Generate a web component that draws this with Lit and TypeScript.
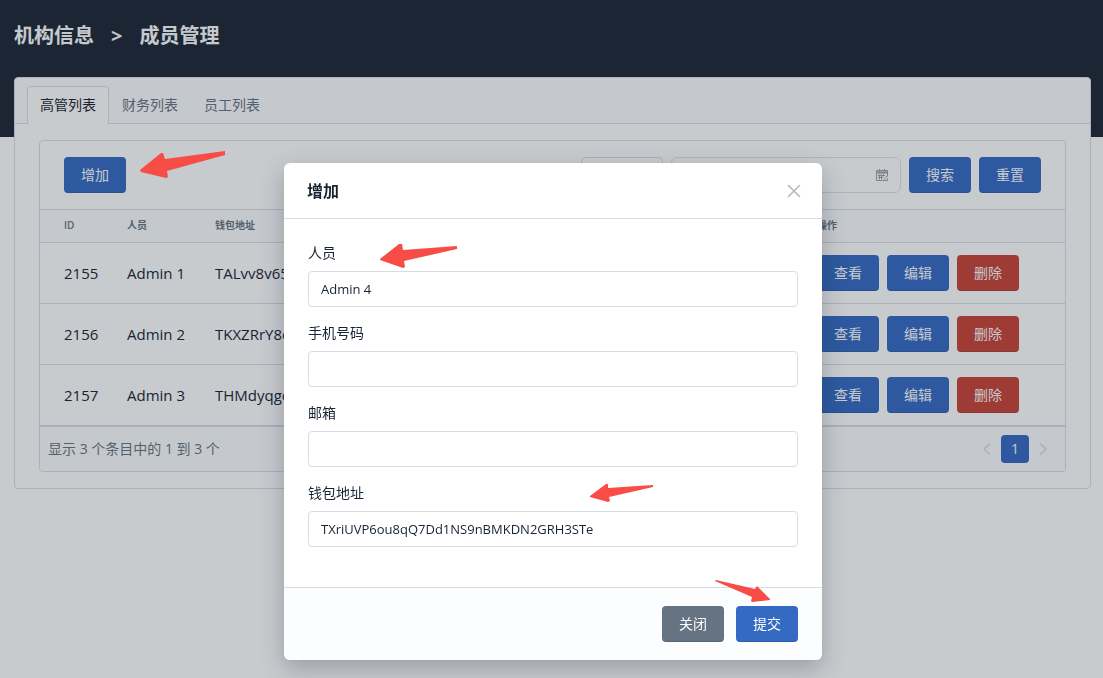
import { LitElement, html, css, svg } from "lit";
import { customElement, property } from "lit/decorators.js";

interface Member {
  id: number;
  name: string;
  wallet: string;
}

interface Field {
  key: string;
  label: string;
  value: string;
}

const MEMBERS: Member[] = [
  { id: 2155, name: "Admin 1", wallet: "TALvv8v65" },
  { id: 2156, name: "Admin 2", wallet: "TKXZRrY8c" },
  { id: 2157, name: "Admin 3", wallet: "THMdyqgc" },
];

const FIELDS: Field[] = [
  { key: "person", label: "人员", value: "Admin 4" },
  { key: "phone", label: "手机号码", value: "" },
  { key: "email", label: "邮箱", value: "" },
  { key: "wallet", label: "钱包地址", value: "TXriUVP6ou8qQ7Dd1NS9nBMKDN2GRH3STe" },
];

const TABS = ["高管列表", "财务列表", "员工列表"];

const base = css`
  * {
    box-sizing: border-box;
  }
  button,
  input,
  select {
    font: inherit;
    margin: 0;
  }
  .btn {
    height: 36px;
    padding: 0 16px;
    border: 1px solid transparent;
    border-bottom-color: rgba(24, 36, 51, 0.16);
    border-radius: 4px;
    background: #356ac3;
    color: #fcfdfe;
    font-size: 14px;
    line-height: 20px;
    white-space: nowrap;
  }
  .btn.danger {
    background: #c94237;
  }
  .btn.neutral {
    background: #667382;
  }
`;

@customElement("member-table")
class MemberTable extends LitElement {
  @property({ attribute: false }) members: Member[] = [];

  static styles = [
    base,
    css`
      :host {
        display: block;
        border: 1px solid #dadce5;
        border-radius: 4px;
        background: #fff;
      }
      .toolbar {
        display: flex;
        gap: 8px;
        padding: 16px 24px;
      }
      .spacer {
        flex: 1;
      }
      .kind {
        width: 82px;
        height: 36px;
        padding: 0 12px;
        border: 1px solid #dadce5;
        border-radius: 4px;
        background: #fff;
        color: #182433;
        font-size: 14px;
        appearance: none;
      }
      .range {
        display: flex;
        align-items: center;
        width: 230px;
        height: 36px;
        padding: 0 12px;
        border: 1px solid #dfe1e6;
        border-radius: 6px;
      }
      .range input {
        flex: 1;
        min-width: 0;
        border: 0;
        outline: 0;
        background: transparent;
      }
      .range svg {
        color: #9a9fa6;
      }
      table {
        width: 100%;
        border-collapse: separate;
        border-spacing: 0;
        table-layout: fixed;
      }
      .c-id {
        width: 79px;
      }
      .c-name {
        width: 88px;
      }
      .c-ops {
        width: 256px;
      }
      th {
        height: 34px;
        padding: 0 8px 2px;
        border-top: 1px solid #dadce5;
        border-bottom: 1px solid #dadce5;
        background: #fcfdfe;
        color: #667382;
        font-size: 10px;
        line-height: 16px;
        font-weight: 600;
        text-align: left;
      }
      td {
        height: 61px;
        padding: 0 8px;
        border-bottom: 1px solid #dadce5;
        color: #182433;
        font-size: 15px;
        line-height: 20px;
        white-space: nowrap;
      }
      th:first-child,
      td:first-child {
        padding-left: 24px;
      }
      .ops {
        display: flex;
        gap: 8px;
      }
      .foot {
        display: flex;
        align-items: center;
        justify-content: space-between;
        padding: 8px;
        border-top: 1px solid #dadce5;
        border-radius: 0 0 4px 4px;
        background: #fcfdfe;
        color: #667382;
        font-size: 14px;
        line-height: 20px;
      }
      .pager {
        display: flex;
      }
      .page {
        display: grid;
        place-items: center;
        width: 28px;
        height: 28px;
        padding: 0;
        border: 0;
        border-radius: 4px;
        background: none;
        color: #d3d7dd;
      }
      .page.current {
        background: #356ac3;
        color: #fcfdfe;
      }
    `,
  ];

  render() {
    return html`
      <div class="toolbar">
        <button class="btn" type="button">增加</button>
        <span class="spacer"></span>
        <select class="kind" aria-label="类型"><option></option></select>
        <div class="range">
          <input type="text" aria-label="日期" />
          <svg width="12" height="12" viewBox="0 0 12 12" fill="none" stroke="currentColor">
            <path d="M.5 1.500h11v6M.5 1.500v10h6M3.500 0v2.500M8.500 0v2.500M2 6.500h7M2 8.500h5M3.500 5.500v5M5.500 5.500v5M7.500 5.500v2M7 11.500h4.500v-2M8 10.500l3.500-4"/>
            <path d="M.5 3.500h11" stroke-width="2"/>
          </svg>
        </div>
        <button class="btn" type="button">搜索</button>
        <button class="btn" type="button">重置</button>
      </div>
      <table>
        <colgroup>
          <col class="c-id" />
          <col class="c-name" />
          <col />
          <col class="c-ops" />
        </colgroup>
        <thead>
          <tr>
            <th>ID</th>
            <th>人员</th>
            <th>钱包地址</th>
            <th>操作</th>
          </tr>
        </thead>
        <tbody>
          ${this.members.map(
            (m) => html`<tr>
              <td>${m.id}</td>
              <td>${m.name}</td>
              <td>${m.wallet}</td>
              <td>
                <div class="ops">
                  <button class="btn" type="button">查看</button>
                  <button class="btn" type="button">编辑</button>
                  <button class="btn danger" type="button">删除</button>
                </div>
              </td>
            </tr>`
          )}
        </tbody>
      </table>
      <div class="foot">
        <span>显示 ${this.members.length} 个条目中的 1 到 ${this.members.length} 个</span>
        <div class="pager">
          <button class="page" type="button" aria-label="上一页">
            <svg width="16" height="16" viewBox="0 0 16 16" fill="none" stroke="currentColor" stroke-width="1.2"><path d="M11 2.500L5 8l6 5.500"/></svg>
          </button>
          <button class="page current" type="button">1</button>
          <button class="page" type="button" aria-label="下一页">
            <svg width="16" height="16" viewBox="0 0 16 16" fill="none" stroke="currentColor" stroke-width="1.2"><path d="M5 2.500L11 8l-6 5.500"/></svg>
          </button>
        </div>
      </div>
    `;
  }
}

@customElement("member-dialog")
class MemberDialog extends LitElement {
  static styles = [
    base,
    css`
      :host {
        position: fixed;
        inset: 0;
        display: block;
        padding: 163px 11px 16px 14px;
        background: rgba(24, 38, 51, 0.24);
        overflow: auto;
      }
      .modal {
        max-width: 538px;
        margin: 0 auto;
        border-radius: 6px;
        background: #fff;
        color: #182433;
        box-shadow: 0 8px 24px rgba(24, 36, 51, 0.28);
        font-size: 14px;
        line-height: 20px;
      }
      .head {
        display: flex;
        align-items: center;
        justify-content: space-between;
        height: 56px;
        padding: 0 20px 0 23px;
        border-bottom: 1px solid #dadce5;
      }
      h2 {
        margin: 0;
        font-size: 16px;
        line-height: 24px;
        font-weight: 700;
      }
      .close {
        display: grid;
        padding: 0;
        border: 0;
        background: none;
        color: #b3b6ba;
      }
      .body {
        padding: 24px;
      }
      .field {
        display: grid;
        gap: 8px;
        margin-bottom: 16px;
      }
      .field input {
        width: 100%;
        height: 36px;
        padding: 0 12px;
        border: 1px solid #dadce5;
        border-radius: 4px;
        background: #fff;
        color: #182433;
        font-size: 13px;
        outline: 0;
      }
      .actions {
        display: flex;
        justify-content: flex-end;
        gap: 12px;
        padding: 18px 24px;
        border-top: 1px solid #dadce5;
        border-radius: 0 0 6px 6px;
        background: #fcfdfe;
      }
    `,
  ];

  render() {
    return html`
      <form class="modal" role="dialog" aria-labelledby="title">
        <div class="head">
          <h2 id="title">增加</h2>
          <button class="close" type="button" aria-label="关闭">
            <svg width="16" height="16" viewBox="0 0 16 16" fill="none" stroke="currentColor" stroke-width="1.5" stroke-linecap="round"><path d="M2.500 2.500l11 11M13.500 2.500l-11 11"/></svg>
          </button>
        </div>
        <div class="body">
          ${FIELDS.map(
            (f) => html`<div class="field">
              <label for=${f.key}>${f.label}</label>
              <input id=${f.key} type="text" .value=${f.value} />
            </div>`
          )}
        </div>
        <div class="actions">
          <button class="btn neutral" type="button">关闭</button>
          <button class="btn" type="button">提交</button>
        </div>
      </form>
    `;
  }
}

// Outline of each pointer arrow: tip first, then around the head and tail.
const ARROWS = [
  "140,170 161,153 163,153 165,159 225,151 225,155 167,171 168,177 166,178 141,172",
  "380,259 399,244 402,244 403,250 457,246 457,249 404,261 405,267 403,268 380,260",
  "590,496 606,484 608,484 608,488 653,485 653,487 609,497 610,501 608,502 590,497",
  "770,599 757,586 755,589 716,580 715,581 752,597 751,601 752,602 770,600",
];

@customElement("app-root")
class AppRoot extends LitElement {
  static styles = [
    base,
    css`
      :host {
        display: block;
        min-height: 100vh;
        background: #fff;
        font-family: "Open Sans", "Noto Sans CJK SC", sans-serif;
      }
      .hero {
        height: 137px;
        padding: 22px 14px;
        background: #1c2534;
      }
      h1 {
        display: flex;
        gap: 17px;
        margin: 0;
        color: #fcfdfe;
        font-size: 20px;
        line-height: 28px;
        font-weight: 700;
      }
      .card {
        margin: -60px 12px 0 14px;
        border: 1px solid #dadce5;
        border-radius: 4px;
        background: #fff;
      }
      .tabs {
        display: flex;
        padding: 8px 12px 0;
        border-bottom: 1px solid #dadce5;
        border-radius: 4px 4px 0 0;
        background: #fcfdfe;
      }
      .tab {
        height: 38px;
        margin-bottom: -1px;
        padding: 0 12px 2px;
        border: 1px solid transparent;
        border-bottom: 0;
        border-radius: 4px 4px 0 0;
        background: none;
        color: #667382;
        font-size: 14px;
        line-height: 20px;
      }
      .tab.active {
        border-color: #dadce5;
        background: #fff;
        color: #182433;
      }
      .content {
        padding: 16px 24px;
      }
      .marks {
        position: absolute;
        top: 0;
        left: 0;
        width: 100%;
        height: 100%;
        fill: #f84c46;
        pointer-events: none;
      }
    `,
  ];

  render() {
    return html`
      <header class="hero">
        <h1><span>机构信息</span><span>&gt;</span><span>成员管理</span></h1>
      </header>
      <main class="card">
        <div class="tabs" role="tablist">
          ${TABS.map(
            (t, i) => html`<button class="tab ${i === 0 ? "active" : ""}" type="button" role="tab">${t}</button>`
          )}
        </div>
        <div class="content">
          <member-table .members=${MEMBERS}></member-table>
        </div>
      </main>
      <member-dialog></member-dialog>
      <svg class="marks" aria-hidden="true">${ARROWS.map((p) => svg`<polygon points=${p} />`)}</svg>
    `;
  }
}
